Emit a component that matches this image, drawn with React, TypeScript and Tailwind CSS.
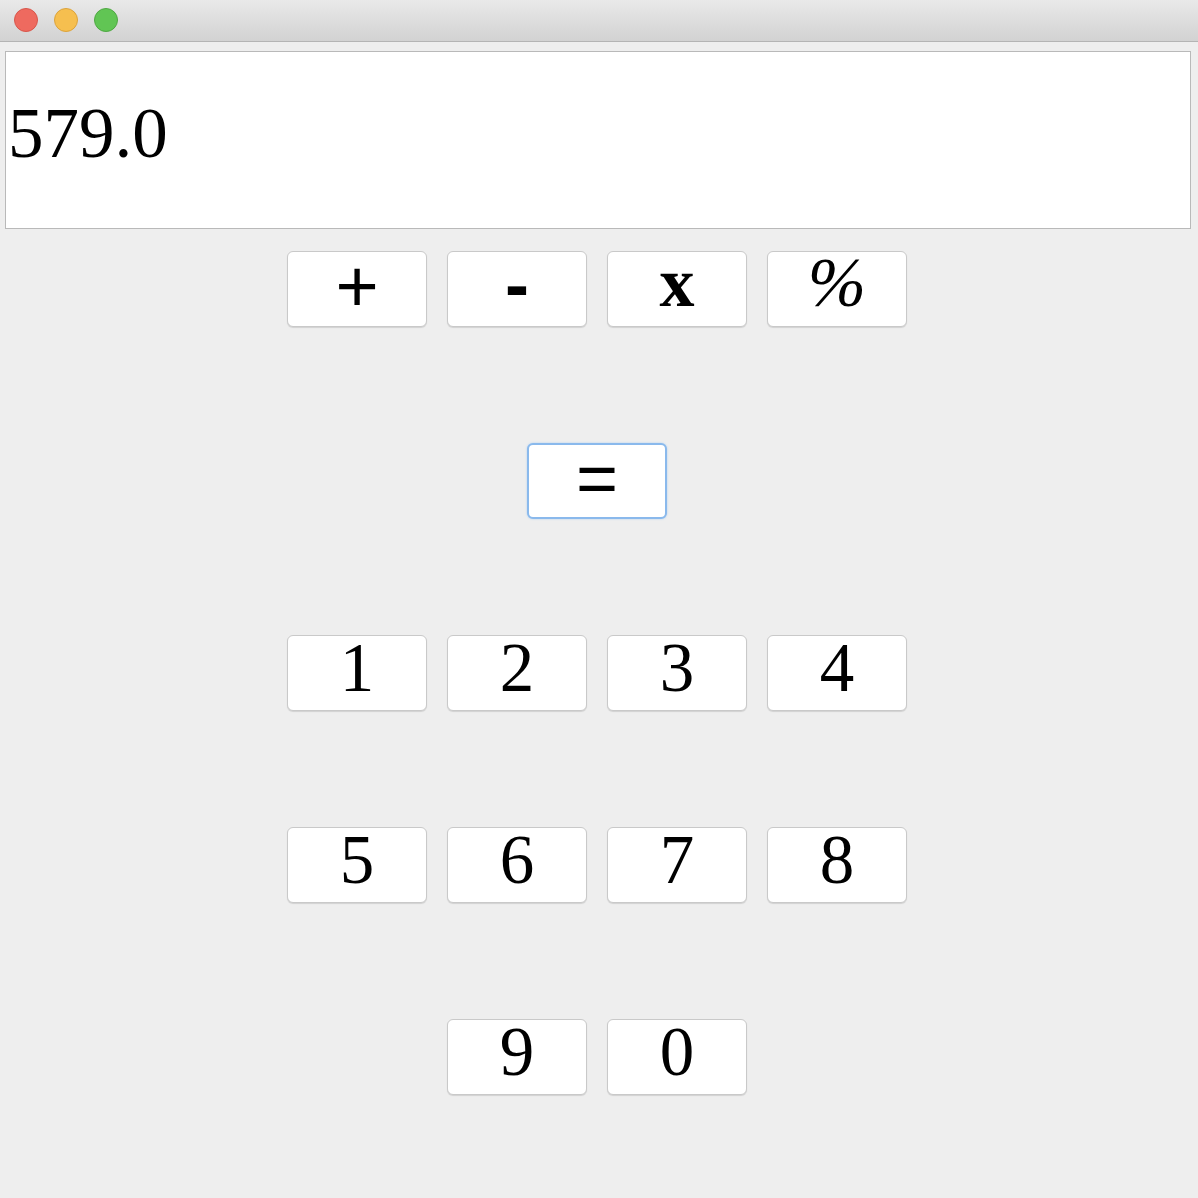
const serif = { fontFamily: '"Liberation Serif", "DejaVu Serif", serif' }

type KeyProps = { label: string; cls?: string; focused?: boolean }

function Key({ label, cls = "font-['Liberation_Serif',serif] text-[69px] -mt-[9px]", focused = false }: KeyProps) {
  return (
    <button
      className={
        'w-[140px] h-[76px] bg-white rounded-[6px] flex items-center justify-center text-black leading-none ' +
        (focused
          ? 'border-2 border-[#8ab9ec] shadow-[0_0_2px_#a9cdf3]'
          : 'border border-[#c9c9c9] shadow-[0_1px_1px_rgba(0,0,0,0.12)]')
      }
    >
      <span className={'block leading-none ' + cls}>{label}</span>
    </button>
  )
}

export default function App() {
  return (
    <div className="w-[1198px] h-[1198px] bg-[#eeeeee] flex flex-col overflow-hidden">
      {/* title bar */}
      <div className="h-[42px] shrink-0 bg-gradient-to-b from-[#e9e9e9] to-[#d2d2d2] border-b border-[#b4b4b4] flex items-center gap-[16px] pl-[14px] pb-[2px]">
        <span className="w-[24px] h-[24px] rounded-full bg-[#ee6a5f] border border-[#d8564b]" />
        <span className="w-[24px] h-[24px] rounded-full bg-[#f6bf4f] border border-[#dca33c]" />
        <span className="w-[24px] h-[24px] rounded-full bg-[#61c554] border border-[#4fa843]" />
      </div>

      {/* display */}
      <div className="mt-[9px] ml-[5px] mr-[7px] h-[178px] bg-white border border-[#b9b9b9] flex items-center pl-[2px]">
        <span className="text-[71px] leading-none text-black pb-[14px]" style={serif}>
          579.0
        </span>
      </div>

      {/* keypad */}
      <div className="mt-[22px] pr-[4px] flex flex-col items-center gap-[116px]">
        <div className="flex gap-[20px]">
          <Key label="+" cls="font-['Liberation_Sans',Arial,sans-serif] text-[74px] -mt-[4px]" />
          <Key label="-" cls="font-['Liberation_Sans',Arial,sans-serif] font-bold text-[72px] -mt-[10px]" />
          <Key label="x" cls="font-['Liberation_Serif',serif] font-bold text-[70px] -mt-[12px]" />
          <Key label="%" cls="font-['Liberation_Serif',serif] italic text-[70px] -mt-[12px]" />
        </div>
        <div className="flex gap-[20px]">
          <Key label="=" cls="font-['Liberation_Sans',Arial,sans-serif] text-[72px] -mt-[6px]" focused />
        </div>
        <div className="flex gap-[20px]">
          <Key label="1" />
          <Key label="2" />
          <Key label="3" />
          <Key label="4" />
        </div>
        <div className="flex gap-[20px]">
          <Key label="5" />
          <Key label="6" />
          <Key label="7" />
          <Key label="8" />
        </div>
        <div className="flex gap-[20px]">
          <Key label="9" />
          <Key label="0" />
        </div>
      </div>
    </div>
  )
}
